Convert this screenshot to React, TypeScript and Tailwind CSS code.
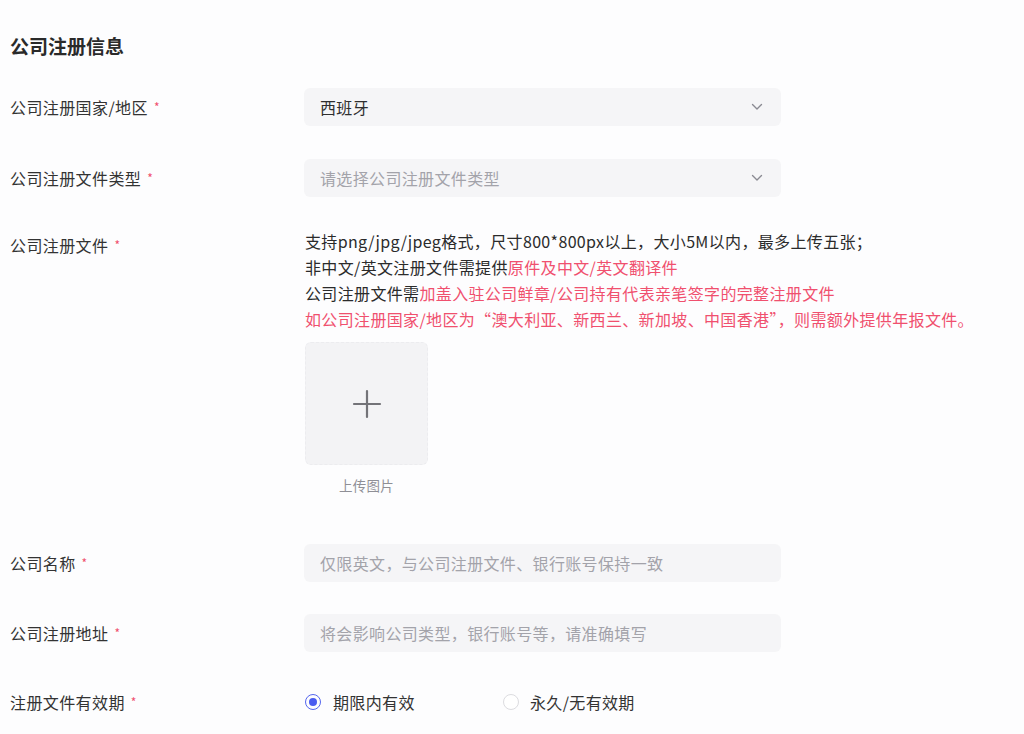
import React from "react";

const font = { fontFamily: '"Noto Sans CJK SC", "Noto Sans", sans-serif' };

function Label({ text, className = "" }: { text: string; className?: string }) {
  return (
    <div className={`w-[294px] shrink-0 text-[16px] tracking-[0.4px] text-[#333333] flex items-center ${className}`}>
      <span>{text}</span>
      <span className="ml-[6px] text-[12px] text-[#f0506e]">*</span>
    </div>
  );
}

function Chevron() {
  return (
    <svg width="12" height="8" viewBox="0 0 12 8" fill="none" className="mr-[18px]">
      <path d="M1.5 1.5 L6 6 L10.5 1.5" stroke="#8a8a92" strokeWidth="1.4" strokeLinecap="round" strokeLinejoin="round" />
    </svg>
  );
}

function Box({ children, select = false }: { children: React.ReactNode; select?: boolean }) {
  return (
    <div className="w-[477px] h-[38px] bg-[#f5f5f7] rounded-[6px] flex items-center justify-between pl-[16px] text-[16px] tracking-[0.35px]">
      <span>{children}</span>
      {select && <Chevron />}
    </div>
  );
}

export default function App() {
  return (
    <div className="min-h-[734px] w-[1024px] bg-[#fdfdfe] pl-[10px]" style={font}>
      <div className="pt-[33px] h-[59px] text-[19px] leading-[26px] font-bold text-[#2a2a2a]">公司注册信息</div>

      <div className="flex items-center mt-[29px] h-[38px]">
        <Label text="公司注册国家/地区" />
        <Box select>
          <span className="text-[#2e2e2e]">西班牙</span>
        </Box>
      </div>

      <div className="flex items-center mt-[33px] h-[38px]">
        <Label text="公司注册文件类型" />
        <Box select>
          <span className="text-[#a3a3aa]">请选择公司注册文件类型</span>
        </Box>
      </div>

      <div className="flex items-start mt-[31px]">
        <Label text="公司注册文件" className="h-[26px] mt-[4px]" />
        <div className="pl-[1px]">
          <div className="text-[16px] leading-[26px] tracking-[0.35px] text-[#2b2b2b]">
            <div>支持png/jpg/jpeg格式，尺寸800*800px以上，大小5M以内，最多上传五张；</div>
            <div>
              非中文/英文注册文件需提供<span className="text-[#f0506e]">原件及中文/英文翻译件</span>
            </div>
            <div>
              公司注册文件需<span className="text-[#f0506e]">加盖入驻公司鲜章/公司持有代表亲笔签字的完整注册文件</span>
            </div>
            <div className="text-[#f0506e]">如公司注册国家/地区为“澳大利亚、新西兰、新加坡、中国香港”，则需额外提供年报文件。</div>
          </div>
          <div className="mt-[10px] w-[123px] h-[123px] rounded-[6px] bg-[#f3f3f5] border border-dashed border-[#ececef] flex items-center justify-center">
            <svg width="30" height="30" viewBox="0 0 30 30">
              <path d="M15 2 V28 M2 15 H28" stroke="#737378" strokeWidth="2.2" strokeLinecap="round" />
            </svg>
          </div>
          <div className="w-[123px] mt-[10px] text-center text-[13.5px] leading-[20px] tracking-[0.3px] text-[#8f8f96]">上传图片</div>
        </div>
      </div>

      <div className="flex items-center mt-[49px] h-[38px]">
        <Label text="公司名称" />
        <Box>
          <span className="text-[#a3a3aa]">仅限英文，与公司注册文件、银行账号保持一致</span>
        </Box>
      </div>

      <div className="flex items-center mt-[32px] h-[38px]">
        <Label text="公司注册地址" />
        <Box>
          <span className="text-[#a3a3aa]">将会影响公司类型，银行账号等，请准确填写</span>
        </Box>
      </div>

      <div className="flex items-center mt-[31px] h-[38px]">
        <Label text="注册文件有效期" />
        <div className="flex items-center text-[16px] tracking-[0.35px] text-[#333333]">
          <div className="w-[199px] flex items-center pl-[1px]">
            <span className="w-[16px] h-[16px] rounded-full border-[1.5px] border-[#5566ee] flex items-center justify-center">
              <span className="w-[8px] h-[8px] rounded-full bg-[#4a5cf0]" />
            </span>
            <span className="ml-[12px]">期限内有效</span>
          </div>
          <div className="flex items-center">
            <span className="w-[16px] h-[16px] rounded-full border border-[#dcdce0] bg-white" />
            <span className="ml-[11px]">永久/无有效期</span>
          </div>
        </div>
      </div>
    </div>
  );
}
